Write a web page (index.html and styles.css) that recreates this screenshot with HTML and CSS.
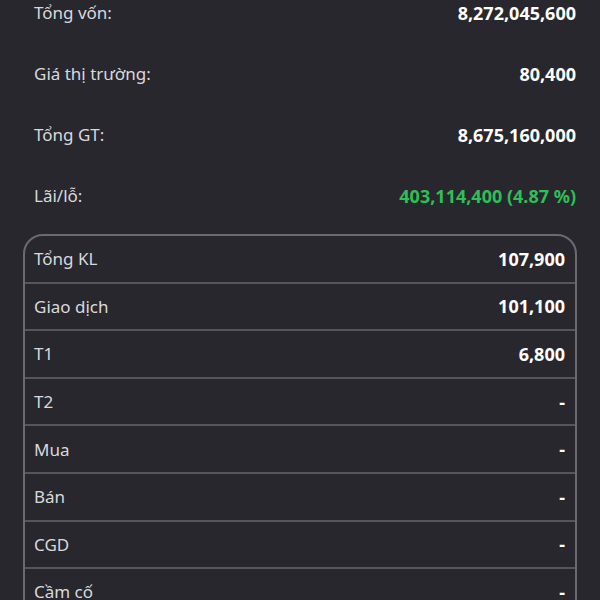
FILE: index.html
```html
<!DOCTYPE html>
<html lang="vi">
<head>
  <meta charset="UTF-8" />
  <meta name="viewport" content="width=device-width, initial-scale=1.0"/>
  <title>Tài sản</title>
  <link rel="stylesheet" href="styles.css">
</head>
<body>
  <div class="summary">
    <div class="summary-row">
      <span class="label">Tổng vốn:</span>
      <span class="value">8,272,045,600</span>
    </div>
    <div class="summary-row">
      <span class="label">Giá thị trường:</span>
      <span class="value">80,400</span>
    </div>
    <div class="summary-row">
      <span class="label">Tổng GT:</span>
      <span class="value">8,675,160,000</span>
    </div>
    <div class="summary-row">
      <span class="label">Lãi/lỗ:</span>
      <span class="value up">403,114,400 (4.87 %)</span>
    </div>
  </div>

  <div class="volume-box">
    <div class="volume-row"><span class="label">Tổng KL</span><span class="value">107,900</span></div>
    <div class="volume-row"><span class="label">Giao dịch</span><span class="value">101,100</span></div>
    <div class="volume-row"><span class="label">T1</span><span class="value">6,800</span></div>
    <div class="volume-row"><span class="label">T2</span><span class="value">-</span></div>
    <div class="volume-row"><span class="label">Mua</span><span class="value">-</span></div>
    <div class="volume-row"><span class="label">Bán</span><span class="value">-</span></div>
    <div class="volume-row"><span class="label">CGD</span><span class="value">-</span></div>
    <div class="volume-row"><span class="label">Cầm cố</span><span class="value">-</span></div>
  </div>
</body>
</html>
```

FILE: styles.css
```css
* {
  margin: 0;
  padding: 0;
  box-sizing: border-box;
}

body, html {
  height: 100%;
  width: 100%;
}

body {
  background-color: #28272d;
  color: #d9d9dd;
  font-family: "Noto Sans", "Open Sans", sans-serif;
  font-size: 17px;
  overflow: hidden;
}

.value {
  color: #fff;
  font-size: 18px;
  font-weight: 700;
}

.value.up {
  color: #2fbf58;
}

.summary {
  display: flex;
  flex-direction: column;
  gap: 37px;
  padding: 1px 24px 0 34px;
}

.summary-row {
  display: flex;
  justify-content: space-between;
  align-items: center;
  line-height: 24px;
}

.volume-box {
  margin: 26px 23px 0 23px;
  border: 2px solid #6a6a70;
  border-radius: 20px;
  overflow: hidden;
}

.volume-row {
  display: flex;
  justify-content: space-between;
  align-items: center;
  height: 47.6px;
  padding: 0 10px 0 9px;
  border-bottom: 2px solid #55555b;
}
```
